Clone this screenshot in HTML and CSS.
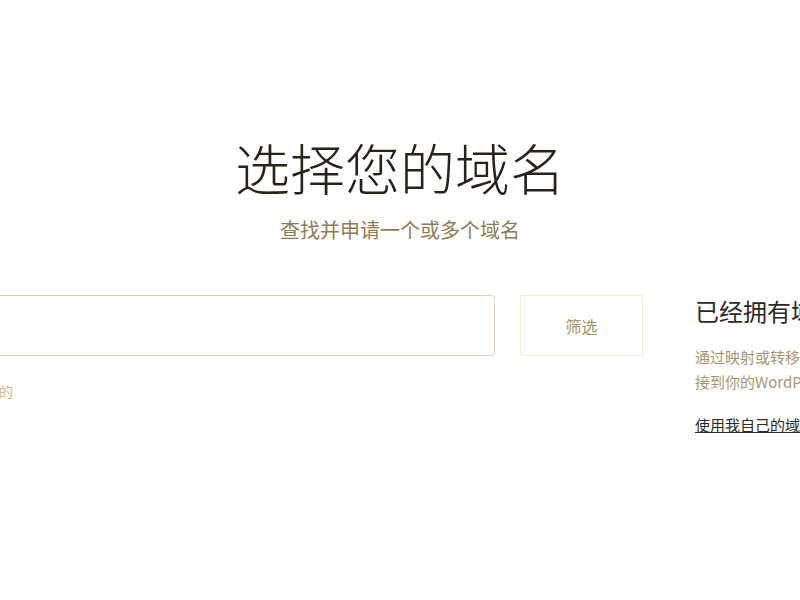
FILE: index.html
```html
<!DOCTYPE html>
<html lang="zh-CN">
<head>
<meta charset="utf-8">
<title>选择您的域名</title>
<link rel="stylesheet" href="styles.css">
</head>
<body>
<main class="page">
  <header class="header">
    <h1 class="title">选择您的域名</h1>
    <p class="subtitle">查找并申请一个或多个域名</p>
  </header>
  <section class="row">
    <div class="search-col">
      <div class="search-line">
        <div class="search-box"></div>
        <button class="filter-btn" type="button">筛选</button>
      </div>
      <p class="hint">输入关键词、公司名称或您的</p>
    </div>
    <aside class="own">
      <h2 class="own-title">已经拥有域名？</h2>
      <p class="own-text">通过映射或转移已有域名以连接到你的WordPress.com站点</p>
      <a class="own-link" href="#">使用我自己的域名</a>
    </aside>
  </section>
</main>
</body>
</html>
```

FILE: styles.css
```css
html, body {
  margin: 0;
  padding: 0;
  overflow: hidden;
  background: #ffffff;
}

body {
  font-family: "Noto Sans CJK SC", "Noto Sans", sans-serif;
  width: 800px;
  height: 600px;
}

.page {
  padding-top: 133px;
}

.header {
  text-align: center;
}

.title {
  margin: 0;
  font-size: 55px;
  line-height: 66px;
  font-weight: 300;
  color: #27231b;
  letter-spacing: 0;
}

.subtitle {
  margin: 17px 0 0;
  font-size: 20px;
  line-height: 28px;
  color: #8f7d52;
}

.row {
  display: flex;
  align-items: flex-start;
  margin-top: 51px;
  margin-left: -169px;
  gap: 52px;
}

.search-col {
  flex: none;
}

.search-line {
  display: flex;
  gap: 25px;
}

.search-box {
  width: 662px;
  height: 59px;
  border: 1px solid #ddd3b6;
  border-radius: 4px;
  background: #fff;
}

.filter-btn {
  width: 123px;
  height: 61px;
  border: 1px solid #f4ecd6;
  border-radius: 2px;
  background: #fff;
  font-family: inherit;
  font-size: 16px;
  color: #a48f5e;
  padding: 0;
}

.hint {
  margin: 25px 0 0;
  font-size: 14px;
  line-height: 20px;
  color: #c9b98f;
}

.own {
  flex: none;
  width: 200px;
}

.own-title {
  margin: 0;
  font-size: 24px;
  line-height: 32px;
  font-weight: 400;
  color: #2b2a26;
  white-space: nowrap;
}

.own-text {
  margin: 17px 0 0;
  font-size: 15px;
  line-height: 25px;
  color: #a8966a;
  width: 200px;
}

.own-link {
  display: inline-block;
  margin-top: 20px;
  font-size: 15px;
  line-height: 22px;
  color: #2b2a26;
  text-decoration: underline;
  white-space: nowrap;
}
```
